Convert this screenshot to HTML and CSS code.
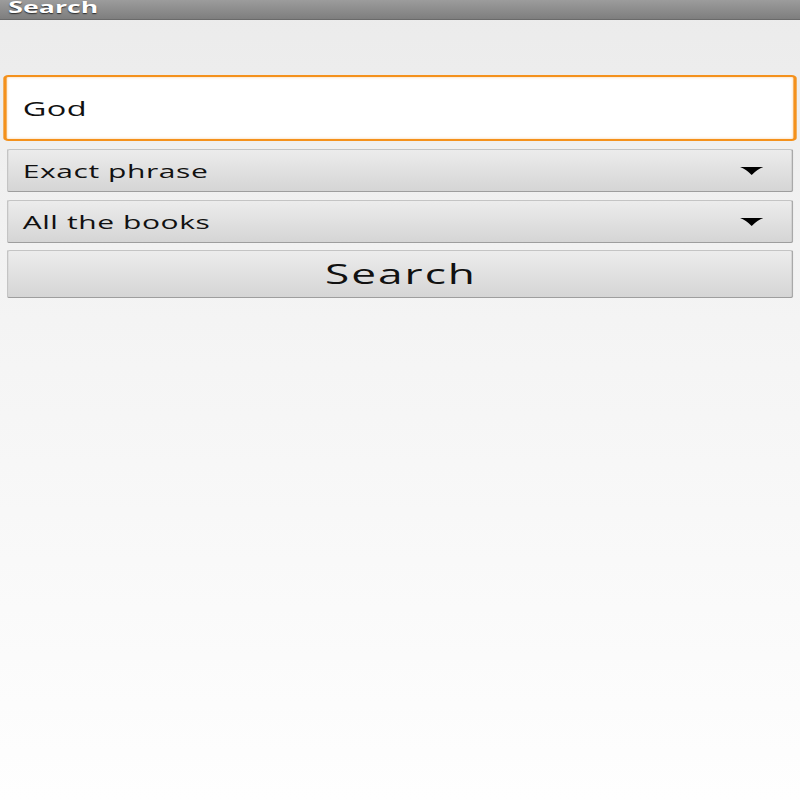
FILE: index.html
```html
<!DOCTYPE html>
<html>
<head>
<meta charset="utf-8">
<link rel="stylesheet" href="styles.css">
</head>
<body>
<div class="screen">
  <div class="titlebar"><span class="title">Search</span></div>
  <div class="content">
    <div class="field"><span class="field-text">God</span></div>
    <div class="spinner">
      <span class="spinner-text">Exact phrase</span>
      <svg class="arrow" width="14" height="8" viewBox="0 0 14 8"><path d="M0 0 H14 Q10.5 2 7 8 Q3.5 2 0 0 Z" fill="#000"/></svg>
    </div>
    <div class="spinner">
      <span class="spinner-text">All the books</span>
      <svg class="arrow" width="14" height="8" viewBox="0 0 14 8"><path d="M0 0 H14 Q10.5 2 7 8 Q3.5 2 0 0 Z" fill="#000"/></svg>
    </div>
    <div class="button"><span class="button-text">Search</span></div>
  </div>
</div>
</body>
</html>
```
FILE: styles.css
```css
html, body {
  margin: 0;
  padding: 0;
  width: 800px;
  height: 800px;
  overflow: hidden;
  background: #fdfdfd;
}
.screen {
  width: 480px;
  height: 800px;
  transform: scaleX(1.6667);
  transform-origin: 0 0;
  display: flex;
  flex-direction: column;
  font-family: "Open Sans", "Noto Sans", sans-serif;
  background: linear-gradient(#ebebeb 0%, #f4f4f4 40%, #fefefe 100%);
}
.titlebar {
  height: 19px;
  background: linear-gradient(#9c9c9c, #7e7e7e);
  border-bottom: 1px solid #6a6a6a;
  padding-left: 5px;
  display: flex;
  align-items: flex-start;
}
.title {
  color: #fff;
  font-weight: 700;
  font-size: 16px;
  line-height: 15px;
  text-shadow: 0 1px 1px rgba(0,0,0,0.7);
}
.content {
  display: flex;
  flex-direction: column;
  padding: 55px 0 0 0;
}
.field {
  margin: 0 2px;
  height: 62px;
  border: 2px solid #f4911c;
  border-radius: 3px;
  background: #fff;
  box-shadow: inset 0 0 2px rgba(244,145,28,0.5);
  display: flex;
  align-items: center;
  padding-left: 9.6px;
}
.field-text {
  font-size: 19.5px;
  color: #111;
  letter-spacing: 0.3px;
}
.spinner {
  margin: 8px 4px 0 4px;
  height: 41px;
  border: 1px solid #c4c4c4;
  border-right-color: #a9a9a9;
  border-bottom-color: #9e9e9e;
  border-radius: 2px;
  background: linear-gradient(#ececec, #d5d5d5);
  display: flex;
  align-items: center;
  justify-content: space-between;
  padding: 0 17px 0 8.6px;
}
.spinner-text {
  font-size: 18px;
  letter-spacing: 0.35px;
  color: #111;
}
.arrow {
  display: block;
  margin-top: 1px;
}
.button {
  margin: 7px 4px 0 4px;
  height: 46px;
  border: 1px solid #c4c4c4;
  border-right-color: #a9a9a9;
  border-bottom-color: #9e9e9e;
  border-radius: 2px;
  background: linear-gradient(#ececec, #d5d5d5);
  display: flex;
  align-items: center;
  justify-content: center;
  color: #111;
}
.button-text {
  font-size: 26.5px;
  letter-spacing: 1.2px;
  padding-left: 1.2px;
}
```
